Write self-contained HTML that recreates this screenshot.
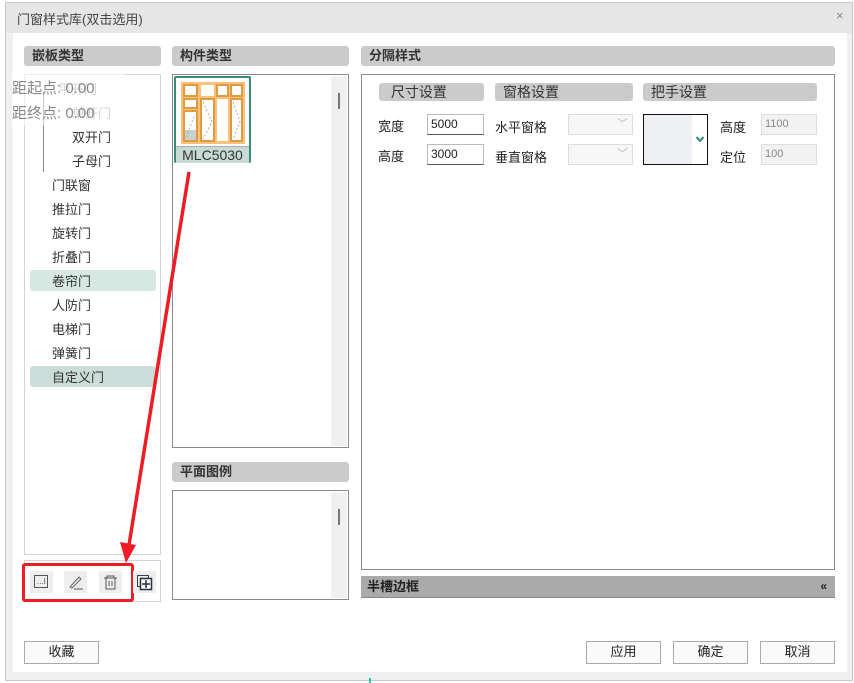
<!DOCTYPE html>
<html><head><meta charset="utf-8"><style>
*{margin:0;padding:0;box-sizing:border-box}
body{width:854px;height:683px;background:#fff;position:relative;overflow:hidden;font-family:"Liberation Sans","Noto Sans CJK SC",sans-serif;font-size:13px;color:#222}
.a{position:absolute}
.hd{position:absolute;background:#cbcbcb;border-radius:3px;font-weight:bold;font-size:13px;padding-left:8px;line-height:20px;color:#333}
.sh{position:absolute;background:#cbcbcb;border-radius:3px;font-size:14px;padding-left:8px;line-height:18px;color:#333}
.box{position:absolute;border:1px solid #8a8a8a;background:#fff}
.li{position:absolute;font-size:13px;color:#333}
.btn{position:absolute;border:1px solid #aaa;background:#fafafa;text-align:center;line-height:20px;font-size:13px;width:75px;height:23px}
.inp{position:absolute;border:1px solid #bbb;border-bottom:1px solid #555;background:#fff;font-size:12px;padding-left:3px;line-height:18px;height:21px}
.dis{position:absolute;border:1px solid #ddd;background:#f2f2f2;font-size:11px;color:#888;padding-left:3px;line-height:18px;height:21px}
</style></head><body>
<div class="a" style="left:5px;top:2px;width:848px;height:679px;border:1px solid #c8c8c8;background:#f0f0f0"></div>
<div class="a" style="left:6px;top:3px;width:846px;height:30px;background:#e6e6e6"></div>
<div class="a" style="left:17px;top:9px;font-size:13px;color:#444">门窗样式库(双击选用)</div>
<div class="a" style="left:836px;top:8px;font-size:13px;color:#888">×</div>
<div class="a" style="left:13px;top:33px;width:834px;height:639px;background:#fff"></div>

<div class="hd" style="left:24px;top:46px;width:137px">嵌板类型</div>
<div class="a" style="left:24px;top:74px;width:137px;height:481px;border:1px solid #d4d4d4"></div>
<div class="a" style="left:43px;top:92px;width:1px;height:80px;background:#888"></div>
<div class="li" style="left:58px;top:79px;color:#999">平开门</div>
<div class="li" style="left:72px;top:103px;color:#999">单开门</div>
<div class="li" style="left:72px;top:127px">双开门</div>
<div class="li" style="left:72px;top:151px">子母门</div>
<div class="li" style="left:52px;top:175px">门联窗</div>
<div class="li" style="left:52px;top:199px">推拉门</div>
<div class="li" style="left:52px;top:223px">旋转门</div>
<div class="li" style="left:52px;top:247px">折叠门</div>
<div class="a" style="left:30px;top:270px;width:126px;height:21px;background:#d6e8e1;border-radius:3px"></div>
<div class="li" style="left:52px;top:271px">卷帘门</div>
<div class="li" style="left:52px;top:295px">人防门</div>
<div class="li" style="left:52px;top:319px">电梯门</div>
<div class="li" style="left:52px;top:343px">弹簧门</div>
<div class="a" style="left:30px;top:366px;width:126px;height:21px;background:#cbddd8;border-radius:3px"></div>
<div class="li" style="left:52px;top:367px">自定义门</div>
<div class="a" style="left:12px;top:72px;width:114px;height:54px;background:rgba(255,255,255,0.55)"></div>
<div class="a" style="left:12px;top:77px;font-size:15px;color:#888">距起点: 0.00</div>
<div class="a" style="left:12px;top:102px;font-size:15px;color:#888">距终点: 0.00</div>

<div class="a" style="left:24px;top:560px;width:137px;height:42px;border:1px solid #d4d4d4"></div>
<div class="a" style="left:22px;top:563px;width:112px;height:39px;border:3px solid #ee1c25;border-radius:3px"></div>
<div class="a" style="left:30px;top:571px;width:23px;height:22px;background:#eee"><div class="a" style="left:4px;top:4px;width:14px;height:13px;border:1px solid #555"></div><div class="a" style="left:7px;top:6px;font-size:8px;color:#555">...I</div></div>
<div class="a" style="left:64px;top:571px;width:23px;height:22px;background:#eee"><svg width="23" height="22"><path d="M6 16 L15 6 L17 8 L8 17 Z" fill="none" stroke="#666"/><path d="M10 18 H19" stroke="#555"/></svg></div>
<div class="a" style="left:99px;top:571px;width:23px;height:22px;background:#eee"><svg width="23" height="22"><path d="M5 7H18M8 7V5H15V7M7 7V18H16V7M10 10V15M13 10V15" fill="none" stroke="#555"/></svg></div>
<div class="a" style="left:133px;top:571px;width:23px;height:22px;background:#eee"><svg width="23" height="22"><rect x="4.5" y="4.5" width="11" height="11" fill="none" stroke="#345"/><rect x="7.5" y="7.5" width="11" height="11" fill="#fff" stroke="#234" stroke-width="1.5"/><path d="M13 9V17M9 13H17" stroke="#234" stroke-width="1.5"/></svg></div>

<div class="hd" style="left:172px;top:46px;width:177px">构件类型</div>
<div class="box" style="left:172px;top:74px;width:177px;height:374px"></div>
<div class="a" style="left:331px;top:76px;width:16px;height:370px;background:#f0f0f0"></div>
<div class="a" style="left:338px;top:93px;width:2px;height:16px;background:#777"></div>
<div class="a" style="left:174px;top:76px;width:77px;height:87px;border:2px solid #3a8a7a;border-radius:2px;background:#fff">
<svg class="a" style="left:5px;top:4px" width="64" height="62"><rect x="0" y="0" width="64" height="62" fill="#fdc17a"/>
<rect x="3" y="3" width="13" height="11" fill="#fff" stroke="#e09a40" stroke-width="2"/><rect x="20" y="3" width="13" height="11" fill="#fff"/><rect x="36" y="3" width="11" height="11" fill="#fff" stroke="#e09a40" stroke-width="2"/><rect x="50" y="3" width="11" height="11" fill="#fff" stroke="#e09a40" stroke-width="2"/>
<rect x="3" y="17" width="13" height="9" fill="#fff" stroke="#e09a40" stroke-width="2"/><rect x="3" y="29" width="13" height="30" fill="#fff" stroke="#e09a40" stroke-width="2"/><rect x="4" y="48" width="11" height="10" fill="#c5d3d0"/>
<rect x="20" y="17" width="13" height="42" fill="#fff" stroke="#e09a40" stroke-width="2"/><rect x="36" y="17" width="11" height="42" fill="#fff"/><rect x="50" y="17" width="11" height="42" fill="#fff" stroke="#e09a40" stroke-width="2"/>
<path d="M22 20L31 40L22 57M52 20L59 40L52 57M5 55L14 32" stroke="#aaa" stroke-dasharray="2 2" fill="none"/></svg>
<div class="a" style="left:0;top:68px;width:73px;height:17px;background:#c8dad6;border-top:1px solid #aaa;font-size:14px;line-height:16px;text-align:center;color:#333">MLC5030</div>
</div>

<div class="hd" style="left:172px;top:462px;width:177px">平面图例</div>
<div class="box" style="left:172px;top:490px;width:177px;height:110px"></div>
<div class="a" style="left:331px;top:492px;width:16px;height:106px;background:#f0f0f0"></div>
<div class="a" style="left:338px;top:509px;width:2px;height:16px;background:#777"></div>

<div class="hd" style="left:361px;top:46px;width:474px">分隔样式</div>
<div class="box" style="left:361px;top:74px;width:474px;height:496px"></div>
<div class="sh" style="left:379px;top:83px;width:105px">&nbsp;尺寸设置</div>
<div class="sh" style="left:495px;top:83px;width:138px">窗格设置</div>
<div class="sh" style="left:643px;top:83px;width:174px">把手设置</div>
<div class="a" style="left:378px;top:116px">宽度</div>
<div class="inp" style="left:427px;top:114px;width:57px">5000</div>
<div class="a" style="left:378px;top:146px">高度</div>
<div class="inp" style="left:427px;top:144px;width:57px">3000</div>
<div class="a" style="left:495px;top:117px">水平窗格</div>
<div class="dis" style="left:568px;top:114px;width:65px;background:#f7f7f7"><span style="position:absolute;right:4px;color:#bbb">﹀</span></div>
<div class="a" style="left:495px;top:147px">垂直窗格</div>
<div class="dis" style="left:568px;top:144px;width:65px;background:#f7f7f7"><span style="position:absolute;right:4px;color:#bbb">﹀</span></div>
<div class="a" style="left:643px;top:114px;width:65px;height:51px;border:1px solid #111;background:#eef0f3"><div class="a" style="left:48px;top:0;width:15px;height:49px;background:#fff"></div><svg class="a" style="left:51px;top:20px" width="10" height="8"><path d="M1.5 2L5 6L8.5 2" fill="none" stroke="#2a8a7a" stroke-width="2"/></svg></div>
<div class="a" style="left:720px;top:117px">高度</div>
<div class="dis" style="left:761px;top:114px;width:56px">1100</div>
<div class="a" style="left:720px;top:147px">定位</div>
<div class="dis" style="left:761px;top:144px;width:56px">100</div>

<div class="a" style="left:361px;top:576px;width:474px;height:22px;background:#aaa;border-bottom:1px solid #888;font-weight:bold;font-size:13px;line-height:21px;padding-left:6px;color:#222">半槽边框<span style="position:absolute;right:8px;font-size:12px">«</span></div>

<div class="btn" style="left:24px;top:641px">收藏</div>
<div class="btn" style="left:586px;top:641px">应用</div>
<div class="btn" style="left:673px;top:641px">确定</div>
<div class="btn" style="left:760px;top:641px">取消</div>
<div class="a" style="left:369px;top:678px;width:2px;height:5px;background:#1ec8a0"></div>

<svg class="a" style="left:0;top:0" width="854" height="683"><line x1="189" y1="172" x2="129" y2="545" stroke="#ee1c25" stroke-width="3.5"/><path d="M120 542 L136 545 L126 563 Z" fill="#ee1c25"/></svg>
</body></html>
